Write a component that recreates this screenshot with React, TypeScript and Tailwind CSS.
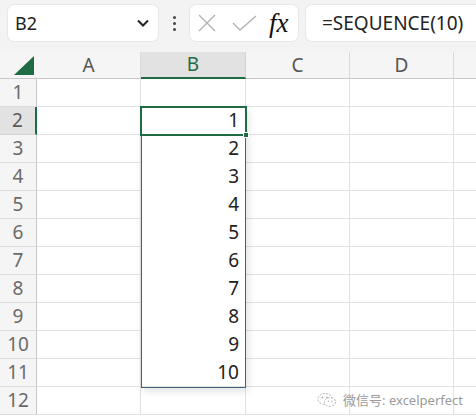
import { Fragment } from 'react'

const cols = ['A', 'B', 'C', 'D']
const rows = [1, 2, 3, 4, 5, 6, 7, 8, 9, 10, 11, 12]

function Toolbar() {
  return (
    <div className="flex h-[52px] items-start gap-0 bg-[#f3f3f3] pt-[5px]">
      {/* name box */}
      <div className="ml-[8px] flex h-[36px] w-[150px] items-center justify-between rounded-[6px] bg-white pl-[7px] pr-[8px] shadow-[0_0_0_1px_#e8e8e8]">
        <span className="text-[18px] text-[#222]">B2</span>
        <svg width="14" height="10" viewBox="0 0 14 10">
          <path d="M2 2.5 L7 7.5 L12 2.5" fill="none" stroke="#222" strokeWidth="2" />
        </svg>
      </div>
      {/* more dots */}
      <div className="flex h-[36px] w-[32px] flex-col items-center justify-center gap-[3px]">
        <span className="h-[3px] w-[3px] rounded-full bg-[#444]" />
        <span className="h-[3px] w-[3px] rounded-full bg-[#444]" />
        <span className="h-[3px] w-[3px] rounded-full bg-[#444]" />
      </div>
      {/* cancel / enter / fx */}
      <div className="flex h-[36px] w-[108px] items-center rounded-[6px] bg-white pl-[7px] shadow-[0_0_0_1px_#e8e8e8]">
        <svg width="20" height="20" viewBox="0 0 20 20">
          <path d="M2 2 L18 18 M18 2 L2 18" stroke="#b3b3b3" strokeWidth="1.4" />
        </svg>
        <svg width="26" height="20" viewBox="0 0 26 20" className="ml-[15px]">
          <path d="M1 10 L8 17 L24 3" fill="none" stroke="#b3b3b3" strokeWidth="1.4" />
        </svg>
        <span className="ml-[11px] text-[27px] leading-none italic text-[#111] [font-family:'Liberation_Serif',serif]">
          fx
        </span>
      </div>
      {/* formula */}
      <div className="ml-[8px] flex h-[36px] flex-1 items-center rounded-l-[6px] bg-white pl-[16px] shadow-[0_0_0_1px_#e8e8e8]">
        <span className="text-[19px] text-[#222]">=SEQUENCE(10)</span>
      </div>
    </div>
  )
}

function Sheet() {
  return (
    <div className="relative">
      <div className="grid grid-cols-[37px_104px_105px_104px_104px_1fr] grid-rows-[27px_repeat(12,28px)]">
        {/* header row */}
        <div className="flex items-center justify-end border-b border-[#c8c8c8] bg-[#f5f5f5] pr-[3px]">
          <svg width="20" height="19" viewBox="0 0 20 19">
            <path d="M20 0 L20 19 L0 19 Z" fill="#1f6c44" />
          </svg>
        </div>
        {cols.map((c) => (
          <div
            key={c}
            className={
              c === 'B'
                ? 'flex items-center justify-center border-r border-b-2 border-r-[#d4d4d4] border-b-[#1f6c44] bg-[#e2e2e2] text-[19px] text-[#1f6c44]'
                : 'flex items-center justify-center border-r border-b border-r-[#dadada] border-b-[#c8c8c8] bg-[#f5f5f5] text-[19px] text-[#555]'
            }
          >
            {c}
          </div>
        ))}
        <div className="border-b border-[#c8c8c8] bg-[#f5f5f5]" />
        {rows.map((r) => (
          <Fragment key={r}>
            <div
              className={
                r === 2
                  ? 'flex items-center justify-center border-b border-r-2 border-b-[#d4d4d4] border-r-[#1f6c44] bg-[#e2e2e2] text-[19px] text-[#5a5a5a]'
                  : 'flex items-center justify-center border-b border-r border-b-[#dcdcdc] border-r-[#c8c8c8] bg-[#f5f5f5] text-[19px] text-[#6a6a6a]'
              }
            >
              {r}
            </div>
            {cols.map((c) => (
              <div
                key={c}
                className={
                  c === 'B' && r >= 2 && r <= 10
                    ? 'flex items-center justify-end border-r border-b border-r-[#e1e1e1] border-b-white bg-white pr-[6px] text-[19px] text-[#222]'
                    : 'flex items-center justify-end border-r border-b border-[#e1e1e1] bg-white pr-[6px] text-[19px] text-[#222]'
                }
              >
                {c === 'B' && r >= 2 && r <= 11 ? r - 1 : ''}
              </div>
            ))}
            <div className="border-b border-[#e1e1e1] bg-white" />
          </Fragment>
        ))}
      </div>
      {/* selected range B2:B11 */}
      <div className="pointer-events-none absolute top-[55px] left-[141px] h-[281px] w-[105px] border border-[#45607e] shadow-[2px_3px_8px_rgba(0,0,0,0.12)]" />
      {/* active cell */}
      <div className="pointer-events-none absolute top-[54px] left-[140px] h-[30px] w-[107px] border-2 border-[#1f6c44]" />
      <div className="pointer-events-none absolute top-[80px] left-[243px] h-[6px] w-[6px] border border-white bg-[#1f6c44]" />
    </div>
  )
}

export default function App() {
  return (
    <div className="relative h-[419px] w-[476px] overflow-hidden bg-white [font-family:'Noto_Sans','Noto_Sans_CJK_SC',sans-serif]">
      <Toolbar />
      <Sheet />
      <div className="absolute right-[13px] bottom-[9px] flex items-center gap-[6px] text-[13px] text-[#9a9a9a]">
        <svg width="20" height="16" viewBox="0 0 20 16">
          <ellipse cx="8" cy="7" rx="7" ry="5.6" fill="none" stroke="#b0b0b0" strokeWidth="1" strokeDasharray="2 1.4" />
          <ellipse cx="13" cy="10" rx="5.5" ry="4.4" fill="white" stroke="#b0b0b0" strokeWidth="1" strokeDasharray="2 1.4" />
          <circle cx="5.5" cy="5.5" r="0.9" fill="#b0b0b0" />
          <circle cx="10" cy="5.5" r="0.9" fill="#b0b0b0" />
          <circle cx="11.5" cy="9.3" r="0.7" fill="#b0b0b0" />
          <circle cx="14.8" cy="9.3" r="0.7" fill="#b0b0b0" />
        </svg>
        <span>微信号: excelperfect</span>
      </div>
    </div>
  )
}
